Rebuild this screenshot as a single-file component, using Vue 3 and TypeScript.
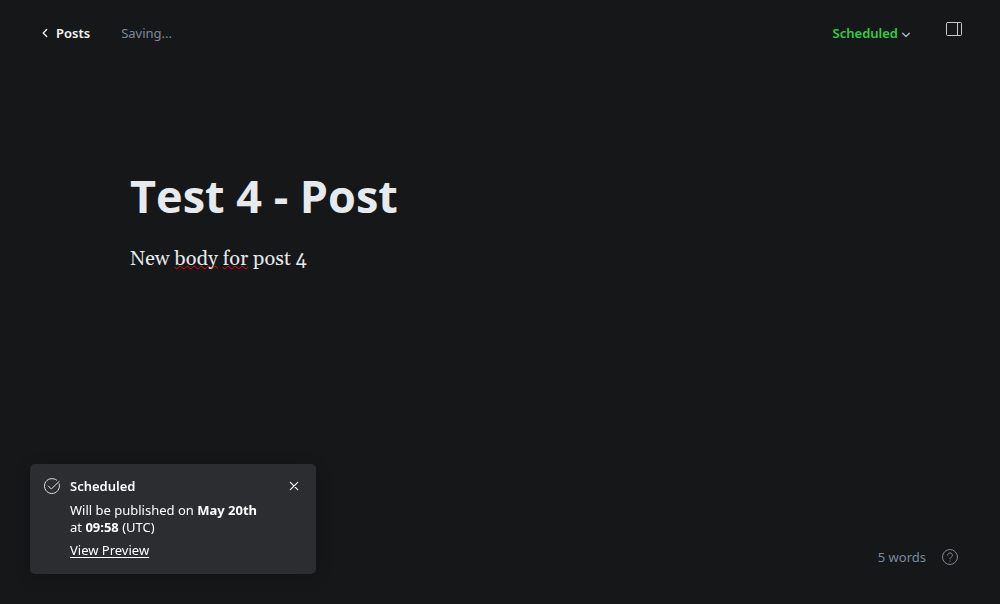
<script setup lang="ts">
import { ref } from 'vue'

const title = ref<string>('Test 4 - Post')
const wordCount = 5
const toastOpen = ref<boolean>(true)
</script>

<template>
  <div class="editor">
    <header class="bar">
      <nav class="crumbs">
        <a class="back" href="#posts">
          <svg class="chevron-left" viewBox="0 0 6 10" aria-hidden="true"><path d="M4.700 1.500 1.200 5l3.500 3.500" /></svg>
          Posts
        </a>
        <span class="status">Saving...</span>
      </nav>
      <div class="actions">
        <button class="schedule" type="button">
          Scheduled
          <svg class="chevron-down" viewBox="0 0 8 6" aria-hidden="true"><path d="m.7 1.200 3.300 3.300 3.300-3.300" /></svg>
        </button>
        <button class="icon-button panel-button" type="button" aria-label="Settings">
          <svg class="panel" viewBox="0 0 16 14" aria-hidden="true">
            <rect x=".5" y=".5" width="15" height="13" rx="1" />
            <path d="M11.500 .5v13" />
          </svg>
        </button>
      </div>
    </header>

    <main class="canvas">
      <input v-model="title" class="title" type="text" aria-label="Post title" />
      <div class="body" contenteditable="true" role="textbox" aria-label="Post body" spellcheck="false">
        New <span class="misspelt">body</span> <span class="misspelt">for</span> post 4
      </div>
    </main>

    <footer class="foot">
      <span>{{ wordCount }} words</span>
      <a class="help" href="#help" aria-label="Help">
        <svg viewBox="0 0 16 16" aria-hidden="true">
          <circle cx="8" cy="8" r="7.500" />
          <path d="M5.600 6.200a2.400 2.400 0 1 1 3.600 2.100C8.300 8.800 8 9.100 8 10" />
          <path d="M8 12v.2" />
        </svg>
      </a>
    </footer>

    <aside v-if="toastOpen" class="toast" role="status">
      <svg class="check" viewBox="0 0 16 16" aria-hidden="true">
        <path d="M15.200 6A7.500 7.500 0 1 1 12.600 2.100" />
        <path d="m4.300 8 3 3 7.800-7.500" />
      </svg>
      <div class="message">
        <h2>Scheduled</h2>
        <p>Will be published on <strong>May 20th</strong><br />at <strong>09:58</strong> (UTC)</p>
        <a href="#preview">View Preview</a>
      </div>
      <button class="icon-button close" type="button" aria-label="Close" @click="toastOpen = false">
        <svg viewBox="0 0 10 10" aria-hidden="true"><path d="m1.300 1.300 7.400 7.400M8.700 1.300 1.300 8.700" /></svg>
      </button>
    </aside>
  </div>
</template>

<style>
body {
  background: #151719;
}
</style>

<style scoped>
.editor {
  box-sizing: border-box;
  min-height: 100vh;
  display: flex;
  flex-direction: column;
  background: #151719;
  color: #e6eaed;
  font-family: "Noto Sans", "Open Sans", sans-serif;
  font-size: 13px;
  line-height: 18px;
}

svg {
  display: block;
  fill: none;
  stroke: currentColor;
  stroke-linecap: round;
  stroke-linejoin: round;
}

button {
  padding: 0;
  border: 0;
  background: none;
  font: inherit;
  color: inherit;
  cursor: pointer;
}

.bar {
  display: flex;
  justify-content: space-between;
  padding: 20px 38px 0 42px;
}

.crumbs,
.actions {
  display: flex;
}

.crumbs {
  gap: 31px;
  padding-top: 4px;
}

.actions {
  gap: 36px;
}

.back {
  display: flex;
  align-items: center;
  gap: 8px;
  color: #f4f5f6;
  font-weight: 600;
  text-decoration: none;
}

.chevron-left {
  width: 6px;
  height: 10px;
  stroke-width: 1.3;
}

.status {
  color: #7c8b9a;
}

.schedule {
  display: flex;
  align-items: center;
  gap: 4px;
  padding-top: 4px;
  color: #30cf43;
  font-weight: 600;
}

.chevron-down {
  width: 8px;
  height: 6px;
  margin-top: 4px;
  color: #abb4be;
  stroke-width: 1.4;
}

.panel-button {
  align-self: flex-start;
  padding-top: 2px;
}

.panel {
  width: 16px;
  height: 14px;
  color: #c8cacc;
}

.canvas {
  flex: 1;
  padding: 123px 130px 0;
}

.title {
  display: block;
  width: 100%;
  height: 62px;
  padding: 0;
  border: 0;
  outline: 0;
  background: none;
  color: #e6eaed;
  font: 700 45px/62px "Open Sans", "Noto Sans", sans-serif;
}

.body {
  padding-top: 16px;
  outline: 0;
  font: 20px/32px Gelasio, Georgia, "Liberation Serif", serif;
}

.misspelt {
  text-decoration: underline wavy #f00808 1px;
  text-underline-offset: 0;
  text-decoration-skip-ink: none;
}

.foot {
  display: flex;
  justify-content: flex-end;
  align-items: center;
  gap: 16px;
  padding: 0 42px 38px;
  color: #7c8b9a;
}

.help {
  color: #7d858d;
}

.help svg {
  width: 16px;
  height: 16px;
}

.toast {
  position: fixed;
  left: 30px;
  bottom: 30px;
  box-sizing: border-box;
  width: 286px;
  display: flex;
  align-items: flex-start;
  gap: 10px;
  padding: 13px 17px 15px 14px;
  border-radius: 5px;
  background: #2b2d31;
  box-shadow: 0 4px 16px rgb(0 0 0 / 20%);
  color: #fff;
  line-height: 17px;
}

.check {
  flex: none;
  width: 16px;
  height: 16px;
  margin-top: 1px;
  color: #dfe1e3;
}

.message {
  flex: 1;
  white-space: nowrap;
}

.message h2 {
  margin: 0;
  font-size: 13px;
  font-weight: 600;
  line-height: 18px;
}

.message p {
  margin: 7px 0 6px;
}

.message a {
  color: inherit;
  text-underline-offset: 2px;
}

.close {
  margin-top: 4px;
}

.close svg {
  width: 10px;
  height: 10px;
  stroke-width: 1.2;
}
</style>
